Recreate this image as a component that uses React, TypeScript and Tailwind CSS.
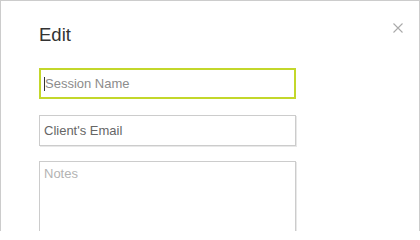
export default function App() {
  return (
    <div className="w-[420px] h-[231px] overflow-hidden bg-white border-x border-t border-[#cccccc] font-['Liberation_Sans',Arial,sans-serif]">
      <div className="pl-[38px] pr-4 pt-[23px]">
        {/* Header */}
        <div className="flex items-start justify-between">
          <h2 className="text-[18.5px] leading-[21px] text-[#333333]">Edit</h2>
          <button type="button" className="mt-[-1px] p-0 text-[#aaaaaa]" aria-label="Close">
            <svg width="10" height="10" viewBox="0 0 10 10" fill="none">
              <path d="M0.5 0.5L9.5 9.5M9.5 0.5L0.5 9.5" stroke="currentColor" strokeWidth="1.1" />
            </svg>
          </button>
        </div>

        {/* Fields */}
        <form className="mt-[23px] flex flex-col w-[257px]">
          <div className="relative">
            <input
              type="text"
              placeholder="Session Name"
              className="w-full h-[31px] border-2 border-[#c3d72b] px-[4px] text-[13px] text-[#333333] outline-none placeholder:text-[#8c8c8c]"
            />
            {/* focused caret */}
            <span className="absolute left-[5px] top-[9px] w-px h-[14px] bg-[#333333]" />
          </div>
          <input
            type="email"
            placeholder="Client's Email"
            className="mt-4 h-[31px] border border-[#cccccc] shadow-[1px_1px_0_#e8e8e8] px-1 text-[13px] text-[#333333] outline-none placeholder:text-[#666666]"
          />
          <textarea
            placeholder="Notes"
            className="mt-[15px] h-[90px] resize-none border border-[#cccccc] shadow-[1px_1px_0_#e8e8e8] px-1 pt-1 text-[13px] leading-4 text-[#333333] outline-none placeholder:text-[#b3b3b3]"
          />
        </form>
      </div>
    </div>
  );
}
